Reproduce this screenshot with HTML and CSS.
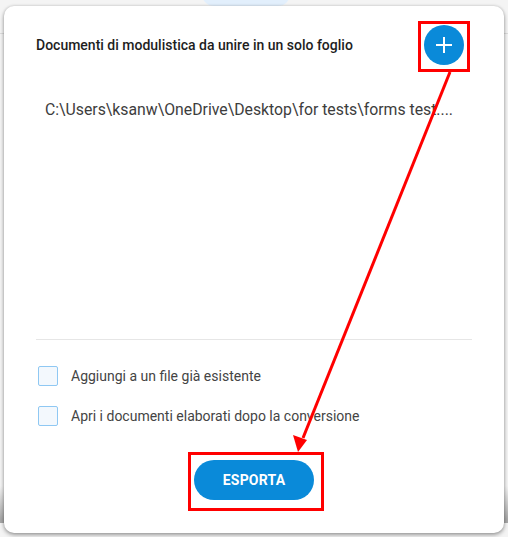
FILE: index.html
```html
<!DOCTYPE html>
<html lang="it">
<head>
    <meta charset="UTF-8">
    <meta name="viewport" content="width=device-width, initial-scale=1.0">
    <title>Unisci modulistica</title>
    <link rel="stylesheet" href="styles.css">
</head>
<body>
    <!-- page behind the modal -->
    <div class="page">
        <div class="page-header">
            <span class="page-tab"></span>
        </div>
    </div>

    <div class="dialog">
        <div class="dialog-header">
            <h2 class="dialog-title">Documenti di modulistica da unire in un solo foglio</h2>
            <button class="add-button" title="Aggiungi">
                <svg width="16" height="16" viewBox="0 0 16 16">
                    <path d="M8 0V16M0 8H16" stroke="#fff" stroke-width="2"/>
                </svg>
            </button>
        </div>

        <div class="file-list">
            <div class="file-item">C:\Users\ksanw\OneDrive\Desktop\for tests\forms test....</div>
        </div>

        <div class="options">
            <label class="option">
                <span class="checkbox"></span>
                Aggiungi a un file già esistente
            </label>
            <label class="option">
                <span class="checkbox"></span>
                Apri i documenti elaborati dopo la conversione
            </label>
        </div>

        <div class="dialog-footer">
            <button class="export-button">ESPORTA</button>
        </div>
    </div>

    <!-- red callouts drawn over the dialog -->
    <svg class="callouts" width="508" height="537" viewBox="0 0 508 537">
        <rect x="419.5" y="22.5" width="49" height="48" fill="none" stroke="#f00" stroke-width="3"/>
        <rect x="189.5" y="453.5" width="133" height="56" fill="none" stroke="#f00" stroke-width="3"/>
        <line x1="450" y1="72" x2="303" y2="438" stroke="#f00" stroke-width="3"/>
        <polygon points="298,452 293,435 307,440" fill="#f00"/>
    </svg>
</body>
</html>
```

FILE: styles.css
```css
body {
    margin: 0;
    font-family: Roboto, 'Liberation Sans', sans-serif;
    background-color: #f4f4f4;
    width: 508px;
    height: 537px;
    overflow: hidden;
    position: relative;
}
.page {
    height: 537px;
    background: linear-gradient(#f4f4f4 0, #f4f4f4 500px, #a8a8a8 533px);
}
.page-header {
    height: 47px;
    border-bottom: 1px solid #dcdcdc;
}
.page-tab {
    display: block;
    width: 88px;
    height: 20px;
    margin: -14px 0 0 202px;
    border-radius: 0 0 12px 12px;
    background-color: #e2effc;
}
.dialog {
    position: absolute;
    left: 4px;
    top: 6px;
    width: 500px;
    height: 527px;
    box-sizing: border-box;
    padding: 19px 32px 33px 32px;
    background-color: white;
    border-radius: 10px;
    box-shadow: 0 2px 4px rgba(0, 0, 0, 0.35), 0 0 3px rgba(0, 0, 0, 0.15);
    display: flex;
    flex-direction: column;
}
.dialog-header {
    display: flex;
    align-items: center;
    justify-content: space-between;
    height: 40px;
}
.dialog-title {
    margin: 0;
    font-size: 14px;
    font-weight: 500;
    color: #1e1e1e;
}
.add-button {
    width: 40px;
    height: 40px;
    margin-right: 8px;
    border: none;
    border-radius: 50%;
    background-color: #0a8ad9;
    display: flex;
    align-items: center;
    justify-content: center;
    padding: 0;
}
.file-list {
    flex: 1;
    padding: 36px 0 0 9px;
    border-bottom: 1px solid #e6e6e6;
}
.file-item {
    font-size: 15.8px;
    line-height: 18px;
    color: #3d3d3d;
}
.options {
    display: flex;
    flex-direction: column;
    gap: 20px;
    padding: 26px 0 0 2px;
}
.option {
    display: flex;
    align-items: center;
    gap: 13px;
    font-size: 14px;
    color: #444;
}
.checkbox {
    width: 18px;
    height: 18px;
    border: 1px solid #8fc8f3;
    border-radius: 2px;
    background-color: #f3f8fd;
}
.dialog-footer {
    display: flex;
    justify-content: center;
    padding-top: 34px;
}
.export-button {
    width: 120px;
    height: 40px;
    border: none;
    border-radius: 20px;
    background-color: #0a8ad9;
    color: white;
    font-family: Roboto, 'Liberation Sans', sans-serif;
    font-size: 14px;
    font-weight: 700;
    letter-spacing: 0.2px;
}
.callouts {
    position: absolute;
    left: 0;
    top: 0;
}
```
